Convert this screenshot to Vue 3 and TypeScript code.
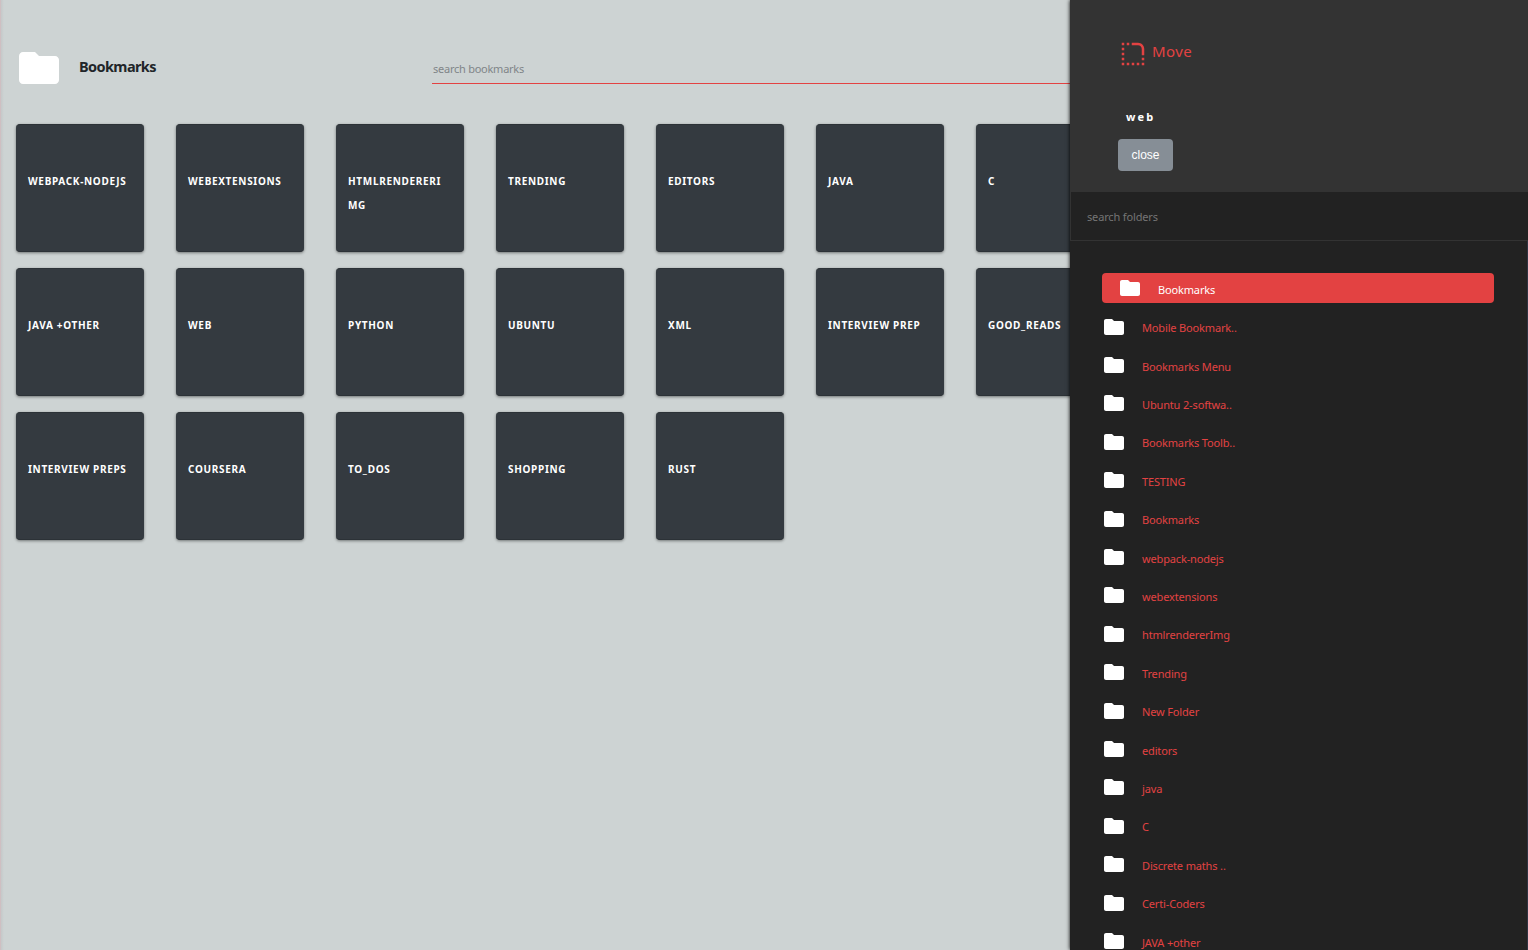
<script setup lang="ts">
const cards: string[] = [
  'webpack-nodejs', 'webextensions', 'htmlrendererimg', 'trending', 'editors', 'java', 'C',
  'java +other', 'web', 'python', 'ubuntu', 'xml', 'interview prep', 'good_reads',
  'interview preps', 'coursera', 'to_dos', 'shopping', 'rust',
]

const folders: string[] = [
  'Bookmarks', 'Mobile Bookmark..', 'Bookmarks Menu', 'Ubuntu 2-softwa..', 'Bookmarks Toolb..',
  'TESTING', 'Bookmarks', 'webpack-nodejs', 'webextensions', 'htmlrendererImg', 'Trending',
  'New Folder', 'editors', 'java', 'C', 'Discrete maths ..', 'Certi-Coders', 'JAVA +other',
]

const folderPath =
  'M10 4H4c-1.1 0-1.99.9-1.99 2L2 18c0 1.1.9 2 2 2h16c1.1 0 2-.9 2-2V8c0-1.1-.9-2-2-2h-8l-2-2z'
const movePath =
  'M19 19h2v2h-2v-2zm0-2h2v-2h-2v2zM3 13h2v-2H3v2zm0 4h2v-2H3v2zm0-8h2V7H3v2zm0-4h2V3H3v2zm4 0h2V3H7v2zm8 16h2v-2h-2v2zm-4 0h2v-2h-2v2zm-4 0h2v-2H7v2zm-4 0h2v-2H3v2zM21 8c0-2.76-2.24-5-5-5h-5v2h5c1.65 0 3 1.35 3 3v5h2V8z'
</script>

<template>
  <div class="page">
    <main class="main">
      <header class="top">
        <svg class="top-icon" viewBox="0 0 24 24"><path :d="folderPath" fill="#fff" /></svg>
        <h1 class="title">Bookmarks</h1>
        <input class="search" type="text" placeholder="search bookmarks" />
      </header>
      <section class="grid">
        <div v-for="card in cards" :key="card" class="card">{{ card }}</div>
      </section>
    </main>
    <aside class="panel">
      <div class="panel-head">
        <div class="move">
          <svg class="move-icon" viewBox="0 0 24 24"><path :d="movePath" fill="#e34242" /></svg>
          <span class="move-label">Move</span>
        </div>
        <div class="selected">web</div>
        <button class="close" type="button">close</button>
      </div>
      <input class="filter" type="text" placeholder="search folders" />
      <div class="list">
        <div v-for="(folder, i) in folders" :key="i" class="row" :class="{ active: i === 0 }">
          <svg class="row-icon" viewBox="0 0 24 24"><path :d="folderPath" fill="#fff" /></svg>
          <span class="row-label">{{ folder }}</span>
        </div>
      </div>
    </aside>
  </div>
</template>

<style>
body { background: #cdd3d3; overflow: hidden; }
</style>

<style scoped>
* { box-sizing: border-box; }
.page {
  display: grid;
  grid-template-columns: 1070px 458px;
  width: 1528px;
  height: 950px;
  overflow: hidden;
  background: #cdd3d3;
  font-family: "Noto Sans", "Open Sans", sans-serif;
}
.main {
  min-width: 0;
  overflow: hidden;
  border-left: 1px solid #cfbfc2;
  background: linear-gradient(to right, #c5c8c9, #cdd3d3 3px);
}
.top {
  display: flex;
  align-items: flex-start;
  height: 124px;
  padding: 44px 0 0 14px;
}
.top-icon { flex: none; width: 48px; height: 48px; }
.title {
  width: 353px;
  margin: 10px 0 0 16px;
  color: #212529;
  font-size: 14.5px;
  line-height: 24px;
  font-weight: 700;
  letter-spacing: -0.6px;
}
.search {
  flex: 1;
  min-width: 0;
  height: 30px;
  margin-top: 10px;
  padding: 0 1px;
  border: 0;
  border-bottom: 1px solid #e34242;
  border-radius: 0;
  background: transparent;
  font: 11px "Noto Sans", sans-serif;
  letter-spacing: -0.25px;
}
.search::placeholder { color: #808588; opacity: 1; }
.grid {
  display: grid;
  grid-template-columns: repeat(7, 128px);
  grid-auto-rows: 128px;
  gap: 16px 32px;
  padding-left: 15px;
}
.card {
  padding: 44px 15px 0 12px;
  border: 1px solid #2c3237;
  border-width: 1px 0;
  border-radius: 4px;
  background: #343a40;
  box-shadow: 0 1px 3px rgba(0, 0, 0, 0.45);
  color: #fff;
  font-size: 10px;
  font-weight: 700;
  line-height: 24px;
  letter-spacing: 0.68px;
  text-transform: uppercase;
  overflow-wrap: anywhere;
}
.panel {
  position: relative;
  display: flex;
  flex-direction: column;
  min-width: 0;
  height: 950px;
  background: #222;
  box-shadow: 0 0 4px #000;
}
.panel-head {
  flex: none;
  height: 192px;
  padding: 39px 0 0 48px;
  background: #333;
}
.move { display: flex; height: 30px; }
.move-icon { width: 30px; height: 30px; }
.move-label {
  margin-left: 4px;
  color: #e34242;
  font-size: 15px;
  line-height: 25px;
  letter-spacing: 0.4px;
}
.selected {
  height: 24px;
  margin: 36px 0 10px 8px;
  color: #fff;
  font-size: 11px;
  font-weight: 700;
  line-height: 24px;
  letter-spacing: 2.1px;
}
.close {
  display: block;
  width: 55px;
  height: 32px;
  padding: 0;
  border: 0;
  border-radius: 4px;
  background: #868e96;
  color: #fff;
  font: 12px "Liberation Sans", Arial, sans-serif;
}
.filter {
  flex: none;
  width: 458px;
  height: 49px;
  padding: 0 16px;
  border: 1px solid #333;
  border-width: 0 0 1px 1px;
  border-radius: 0;
  background: #222;
  color: #fff;
  font: 11px "Noto Sans", sans-serif;
  letter-spacing: -0.15px;
}
.filter::placeholder { color: #757575; }
.list {
  display: flex;
  flex: 1;
  flex-direction: column;
  gap: 8.4px;
  min-height: 0;
  overflow: hidden;
  padding: 32.3px 33px 0 32px;
  border-right: 1px solid #2f3442;
}
.row {
  display: flex;
  flex: none;
  align-items: center;
  height: 30px;
  color: #e34242;
  font-size: 11px;
  letter-spacing: -0.15px;
}
.row.active {
  padding-left: 16px;
  border-radius: 4px;
  background: #e34242;
  color: #fff;
}
.row-icon { width: 24px; height: 24px; }
.row-label { margin: 3.2px 0 0 16px; line-height: 20px; white-space: nowrap; }
</style>
